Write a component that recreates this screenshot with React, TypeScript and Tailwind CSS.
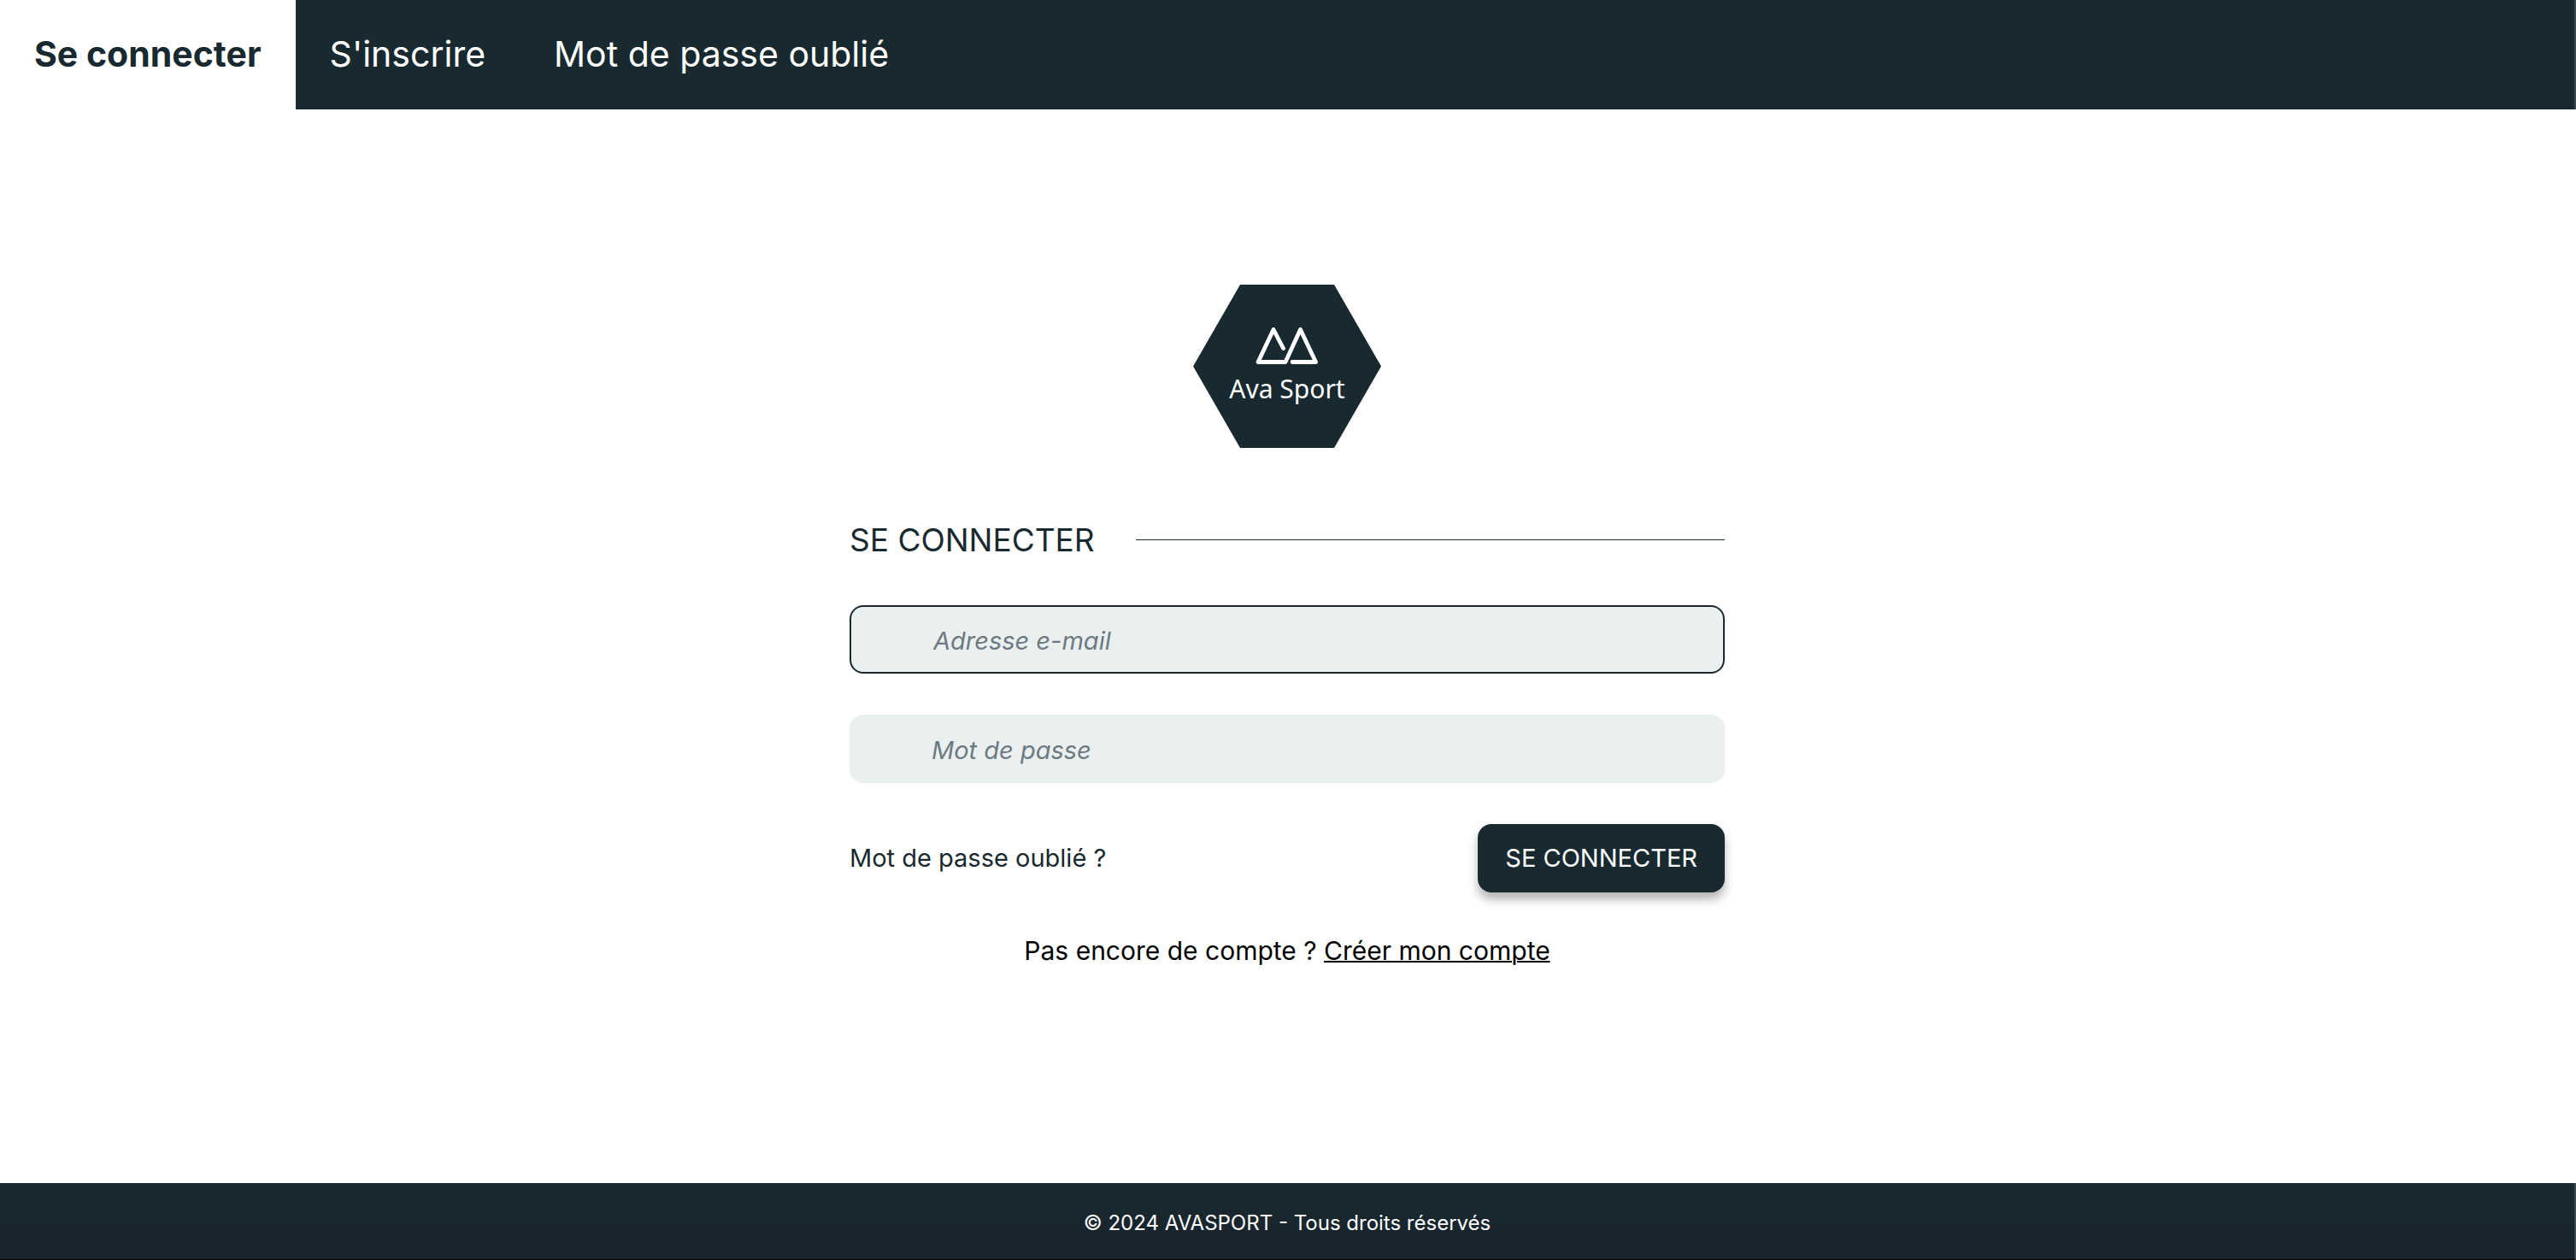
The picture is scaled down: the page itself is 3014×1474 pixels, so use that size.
import React from "react";

const navItems = [
  { label: "Se connecter", active: true },
  { label: "S'inscrire", active: false },
  { label: "Mot de passe oublié", active: false },
];

function Logo() {
  return (
    <svg
      className="h-[191px] w-[220px]"
      viewBox="0 0 220 191"
      role="img"
      aria-label="Ava Sport"
    >
      <polygon points="55,0 165,0 220,95.5 165,191 55,191 0,95.5" fill="#192930" />
      <g fill="none" stroke="#ffffff" strokeWidth="4.8" strokeLinecap="round" strokeLinejoin="round">
        <path d="M105.5 74.5 L94 52.5 L76 90.5 L108 90.5 L125.5 52.5 L143.5 90.5 L116 90.5" />
      </g>
      <text
        x="110"
        y="133"
        textAnchor="middle"
        fill="#ffffff"
        className="font-['Noto_Sans',sans-serif] text-[30px]"
      >
        Ava Sport
      </text>
    </svg>
  );
}

function Header() {
  return (
    <header className="border-r-2 border-[#38464d] bg-[#192930]">
      <nav className="flex">
        {navItems.map((item) => (
          <a
            key={item.label}
            href="#"
            aria-current={item.active ? "page" : undefined}
            className={
              item.active
                ? "flex h-32 items-center bg-white px-10 text-[41px] font-bold text-[#192930]"
                : "flex h-32 items-center px-10 text-[41px] text-white"
            }
          >
            {item.label}
          </a>
        ))}
      </nav>
    </header>
  );
}

function LoginForm() {
  const field =
    "h-20 w-full rounded-2xl bg-[#eaf0f0] px-24 pt-1 text-[29px] text-[#192930] outline-none placeholder:italic placeholder:text-[#6e7980]";
  return (
    <form className="flex w-full max-w-[1024px] flex-col gap-12">
      <div className="flex items-center gap-12">
        <h1 className="text-[37px] leading-[56px] text-[#192930]">SE CONNECTER</h1>
        <div className="h-px flex-1 bg-[#192930]" />
      </div>
      <input
        type="email"
        aria-label="Adresse e-mail"
        placeholder="Adresse e-mail"
        className={field + " border-2 border-[#192930]"}
      />
      <input
        type="password"
        aria-label="Mot de passe"
        placeholder="Mot de passe"
        className={field}
      />
      <div className="flex items-center justify-between">
        <a href="#" className="text-[29px] text-[#192930]">
          Mot de passe oublié ?
        </a>
        <button
          type="submit"
          className="h-20 rounded-2xl bg-[#192930] px-8 text-[29px] text-white shadow-[0_8px_12px_rgba(0,0,0,0.3)]"
        >
          SE CONNECTER
        </button>
      </div>
      <p className="text-center text-[30px] leading-10 text-black">
        Pas encore de compte ?{" "}
        <a href="#" className="underline decoration-2">
          Créer mon compte
        </a>
      </p>
    </form>
  );
}

export default function App() {
  return (
    <div className="flex min-h-screen flex-col bg-white font-['Inter',sans-serif]">
      <Header />
      <main className="flex flex-1 flex-col items-center justify-center gap-20 border-r-2 border-white px-8 pb-12">
        <Logo />
        <LoginForm />
      </main>
      <footer className="flex h-[90px] items-center justify-center border-r-2 border-b border-r-[#38464d] border-b-black bg-linear-to-b from-[#192930] to-[#18232c] pt-1 text-2xl text-white">
        <p>© 2024 AVASPORT - Tous droits réservés</p>
      </footer>
    </div>
  );
}
